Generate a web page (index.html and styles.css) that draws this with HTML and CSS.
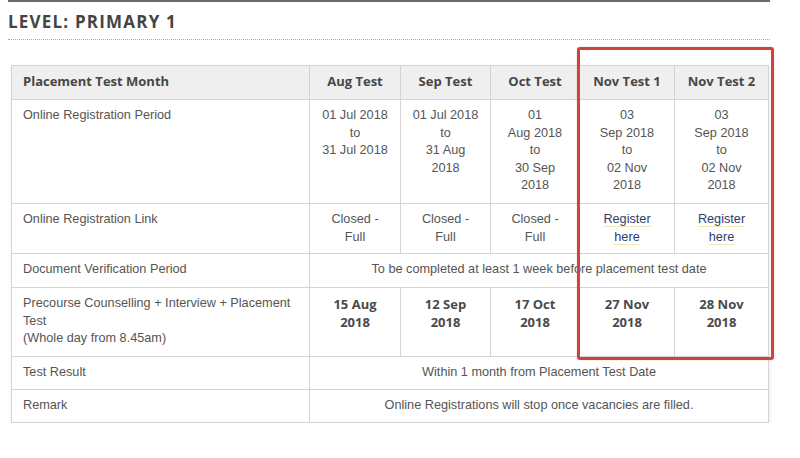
FILE: index.html
```html
<!DOCTYPE html>
<html>
<head>
<meta charset="utf-8">
<link rel="stylesheet" href="styles.css">
</head>
<body>
<div class="page">
  <div class="topline"></div>
  <h2 class="level">LEVEL: PRIMARY 1</h2>
  <div class="dots"></div>
  <table class="sched">
    <colgroup>
      <col class="c-label"><col class="c-aug"><col class="c-sep"><col class="c-oct"><col class="c-nov1"><col class="c-nov2">
    </colgroup>
    <thead>
      <tr class="r-head">
        <th class="lbl">Placement Test Month</th>
        <th>Aug Test</th>
        <th>Sep Test</th>
        <th>Oct Test</th>
        <th>Nov Test 1</th>
        <th>Nov Test 2</th>
      </tr>
    </thead>
    <tbody>
      <tr class="r-period">
        <td class="lbl">Online Registration Period</td>
        <td>01 Jul 2018<br>to<br>31 Jul 2018</td>
        <td>01 Jul 2018<br>to<br>31 Aug<br>2018</td>
        <td>01<br>Aug 2018<br>to<br>30 Sep<br>2018</td>
        <td>03<br>Sep 2018<br>to<br>02 Nov<br>2018</td>
        <td>03<br>Sep 2018<br>to<br>02 Nov<br>2018</td>
      </tr>
      <tr class="r-link">
        <td class="lbl">Online Registration Link</td>
        <td>Closed -<br>Full</td>
        <td>Closed -<br>Full</td>
        <td>Closed -<br>Full</td>
        <td><a class="reg" href="#">Register<br>here</a></td>
        <td><a class="reg" href="#">Register<br>here</a></td>
      </tr>
      <tr class="r-doc">
        <td class="lbl">Document Verification Period</td>
        <td colspan="5">To be completed at least 1 week before placement test date</td>
      </tr>
      <tr class="r-test">
        <td class="lbl">Precourse Counselling + Interview + Placement Test<br>(Whole day from 8.45am)</td>
        <td class="date">15 Aug<br>2018</td>
        <td class="date">12 Sep<br>2018</td>
        <td class="date">17 Oct<br>2018</td>
        <td class="date">27 Nov<br>2018</td>
        <td class="date">28 Nov<br>2018</td>
      </tr>
      <tr class="r-result">
        <td class="lbl">Test Result</td>
        <td colspan="5">Within 1 month from Placement Test Date</td>
      </tr>
      <tr class="r-remark">
        <td class="lbl">Remark</td>
        <td colspan="5">Online Registrations will stop once vacancies are filled.</td>
      </tr>
    </tbody>
  </table>
  <div class="highlight"></div>
</div>
</body>
</html>
```

FILE: styles.css
```css
html, body {
  margin: 0;
  padding: 0;
  background: #fff;
}

.page {
  position: relative;
  width: 762px;
  margin-left: 8px;
}

.topline {
  height: 2px;
  background: #6a6a6a;
}

.level {
  margin: 0;
  padding-top: 9px;
  height: 28px;
  font-family: "Open Sans", "Liberation Sans", sans-serif;
  font-weight: 700;
  font-size: 17px;
  line-height: 22px;
  letter-spacing: 1.2px;
  color: #444;
}

.dots {
  border-top: 1px dotted #a8a8a8;
}

.sched {
  margin-top: 25px;
  margin-left: 3px;
  width: 757px;
  table-layout: fixed;
  border-collapse: collapse;
  font-family: "Liberation Sans", Arial, sans-serif;
  font-size: 12.7px;
  line-height: 17.5px;
  color: #555;
  box-shadow: 1px 1px 4px rgba(0, 0, 0, 0.08);
}

.c-label { width: 298px; }
.c-aug { width: 91px; }
.c-sep { width: 90px; }
.c-oct { width: 89px; }
.c-nov1 { width: 95px; }
.c-nov2 { width: 94px; }

.r-head { height: 34px; }
.r-period { height: 104px; }
.r-link { height: 50px; }
.r-doc { height: 34px; }
.r-test { height: 69px; }
.r-result { height: 33px; }
.r-remark { height: 33px; }

.sched th,
.sched td {
  border: 1px solid #d4d4d4;
  padding: 7px 6px 0;
  text-align: center;
  vertical-align: top;
}

.sched th {
  padding-top: 7px;
  background: #efefef;
  font-family: "Open Sans", "Liberation Sans", sans-serif;
  font-weight: 700;
  font-size: 13px;
  color: #474747;
}

.sched .lbl {
  text-align: left;
  padding-left: 11px;
  padding-right: 11px;
}

.sched td.date {
  font-family: "Open Sans", "Liberation Sans", sans-serif;
  font-weight: 700;
  font-size: 13px;
  line-height: 18px;
  color: #4a4a4a;
}

.reg {
  color: #2f3d6b;
  text-decoration: none;
  border-bottom: 1px solid #f1e8b8;
}

.highlight {
  position: absolute;
  left: 569px;
  top: 47px;
  width: 191px;
  height: 307px;
  border: 3px solid #d0433c;
  border-radius: 3px;
  box-shadow: 0 0 2px rgba(208, 67, 60, 0.3);
  pointer-events: none;
}
```
